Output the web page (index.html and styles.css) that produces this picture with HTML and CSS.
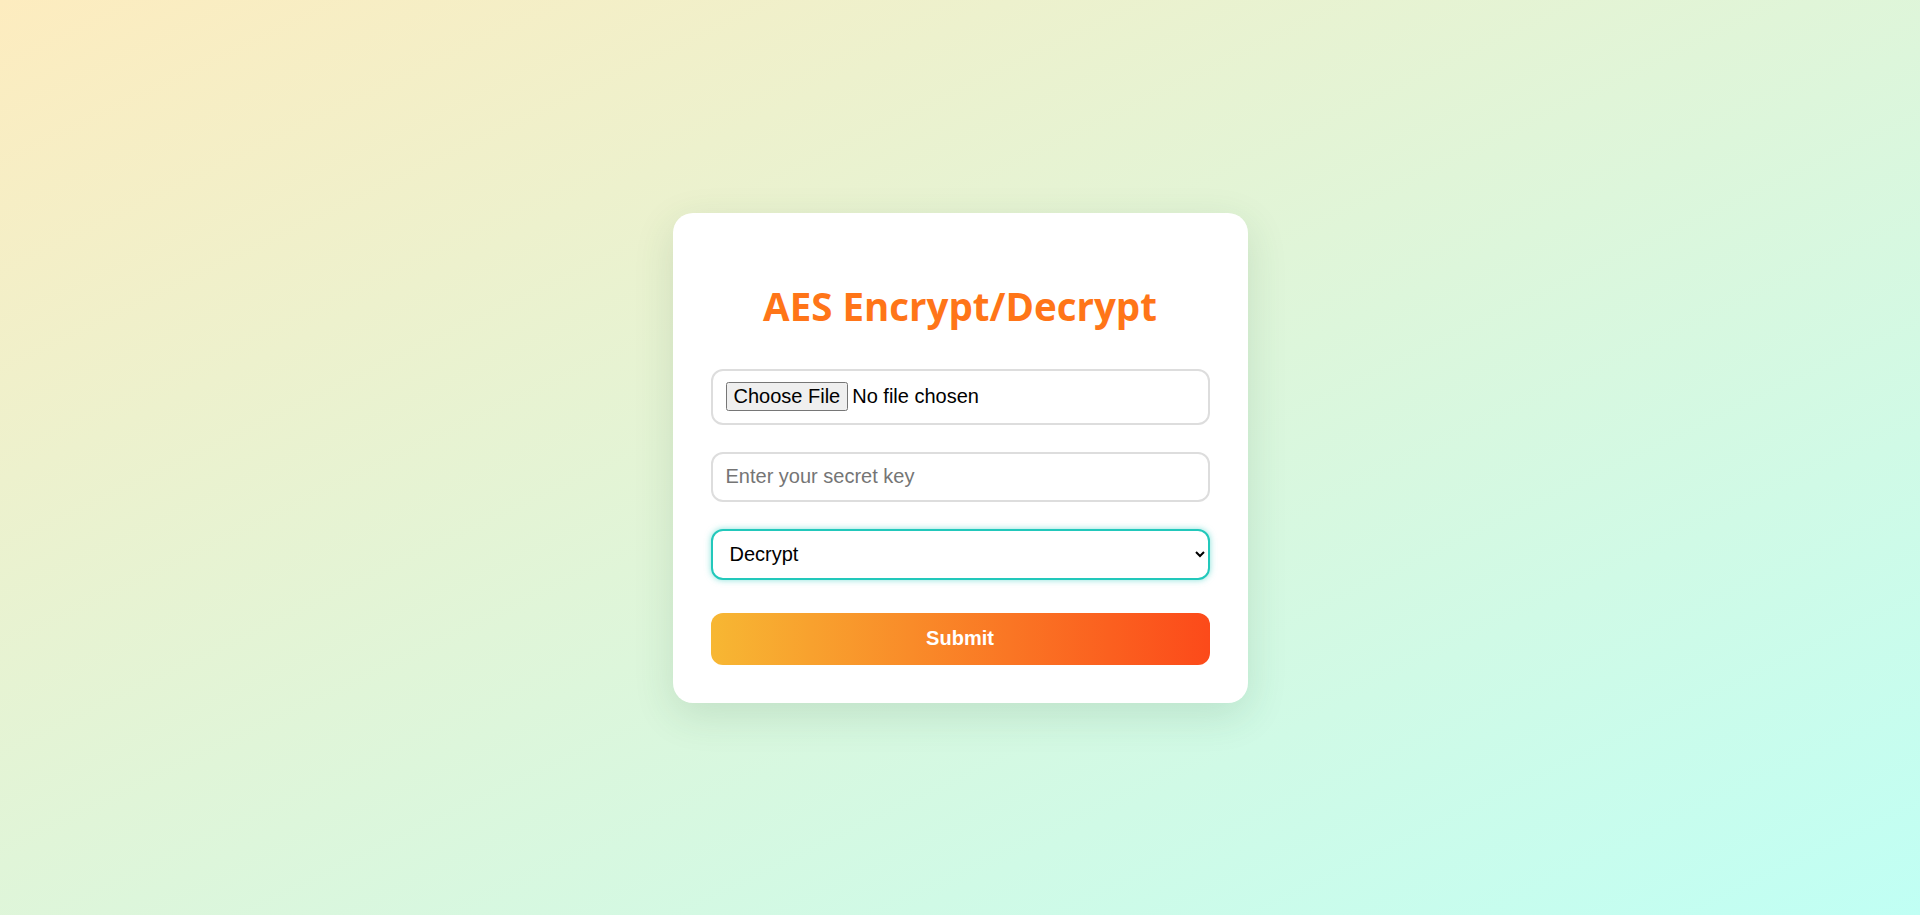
FILE: index.html
```html
<!DOCTYPE html>
<html lang="en">
<head>
<meta charset="utf-8">
<title>AES Encrypt/Decrypt</title>
<link rel="stylesheet" href="styles.css">
</head>
<body>
  <main class="page">
    <form class="card">
      <h2 class="title">AES Encrypt/Decrypt</h2>
      <input class="field field-file" type="file">
      <input class="field field-text" type="text" placeholder="Enter your secret key">
      <select class="field field-select">
        <option>Encrypt</option>
        <option selected>Decrypt</option>
      </select>
      <button class="submit" type="button">Submit</button>
    </form>
  </main>
</body>
</html>
```
FILE: styles.css
```css
* { box-sizing: border-box; }

html, body {
  margin: 0;
  padding: 0;
  height: 100%;
}

body {
  font-family: "Liberation Sans", Arial, sans-serif;
  background: linear-gradient(to bottom right, #fdecbf, #c0fff4);
}

.page {
  height: 100vh;
  display: flex;
  align-items: center;
  justify-content: center;
}

.card {
  width: 575px;
  padding: 38px 38px;
  background: #ffffff;
  border-radius: 20px;
  box-shadow: 0 12px 40px rgba(40, 90, 60, 0.14);
  display: flex;
  flex-direction: column;
}

.title {
  margin: 30px 0 38px;
  height: 50px;
  line-height: 50px;
  text-align: center;
  font-family: "Open Sans", sans-serif;
  font-weight: 700;
  font-size: 38.5px;
  letter-spacing: 0;
  color: #ff7518;
}

.field {
  width: 100%;
  font-family: "Liberation Sans", Arial, sans-serif;
  font-size: 20px;
  border: 2px solid #dddddd;
  border-radius: 12px;
  background: #ffffff;
  color: #000000;
  padding: 11.5px 13px;
  margin: 0 0 27px;
  outline: none;
}

.field-text::placeholder {
  color: #757575;
}

.field-file {
  height: 56px;
}

.field-text {
  height: 50px;
}

.field-select {
  height: 51px;
  margin-bottom: 33px;
  padding-right: 18px;
  border-color: #22c8bb;
  box-shadow: 0 0 6px rgba(34, 200, 187, 0.55);
}

.submit {
  height: 52px;
  border: none;
  border-radius: 12px;
  background: linear-gradient(to right, #f7b733, #fc4a1a);
  color: #ffffff;
  font-family: "Liberation Sans", Arial, sans-serif;
  font-weight: 700;
  font-size: 20px;
  cursor: pointer;
}
```
